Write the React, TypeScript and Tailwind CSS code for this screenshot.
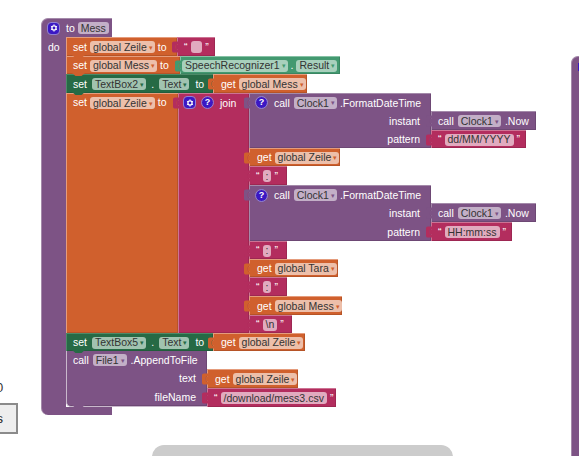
import type { ReactNode } from "react";
import { clsx } from "clsx";
import { twMerge } from "tailwind-merge";

type Tone = "purple" | "orange" | "magenta" | "green" | "dark";

const TONES: Record<Tone, { bg: string; chip: string; arrow: string; fill: string }> = {
  purple: { bg: "bg-[#7d5385] border-[#a48aaa]", chip: "bg-[#c3afc7]", arrow: "text-[#7d5385]", fill: "#7d5385" },
  orange: { bg: "bg-[#d0602d] border-[#e59c7c]", chip: "bg-[#edbfaa]", arrow: "text-[#d0602d]", fill: "#d0602d" },
  magenta: { bg: "bg-[#b32d5e] border-[#cd7394]", chip: "bg-[#e1abbf]", arrow: "text-[#b32d5e]", fill: "#b32d5e" },
  green: { bg: "bg-[#439970] border-[#86c2a5]", chip: "bg-[#a8d0bc]", arrow: "text-[#439970]", fill: "#439970" },
  dark: { bg: "bg-[#266a45] border-[#4c8a68]", chip: "bg-[#a1c3b0]", arrow: "text-[#266a45]", fill: "#266a45" },
};

function Chip({ tone, label, arrow = true, className }: { tone: Tone; label: string; arrow?: boolean; className?: string }) {
  return (
    <span
      className={clsx(
        "flex h-[12px] shrink-0 items-center whitespace-pre rounded-[3px] pl-[3px] text-[#333333]",
        arrow ? "pr-[1px]" : "pr-[3px]",
        TONES[tone].chip,
        className,
      )}
    >
      <span>{label}</span>
      {arrow && <span className={clsx("ml-[2px] w-[5px] text-[7px] leading-none", TONES[tone].arrow)}>▾</span>}
    </span>
  );
}

function Gear() {
  return (
    <span className="flex h-[11px] w-[11px] shrink-0 items-center justify-center rounded-[3px] bg-[#3a18c4] outline outline-1 outline-[#8f7fd6]">
      <svg width="8" height="8" viewBox="0 0 8 8">
        <circle cx="4" cy="4" r="2.1" fill="none" stroke="#fff" strokeWidth="1.3" />
        <path d="M4 .4v1.2M4 6.4v1.2M.9 2.2l1 .6M6.1 5.2l1 .6M.9 5.8l1-.6M6.1 2.8l1-.6" stroke="#fff" strokeWidth="1" />
      </svg>
    </span>
  );
}

function Help() {
  return (
    <span className="flex h-[11px] w-[11px] shrink-0 items-center justify-center rounded-full bg-[#3a18c4] text-[9px] font-bold leading-none text-white outline outline-1 outline-[#8f7fd6]">
      ?
    </span>
  );
}

// little puzzle tab sticking out on the left of a value block
function Tab({ fill }: { fill: string }) {
  return (
    <svg className="absolute left-[-7px] top-[3px]" width="7" height="12" viewBox="0 0 7 12">
      <path d="M7 .5H3C1.6.5 1 1.4 1 2.6v6.8c0 1.2.6 2.1 2 2.1h4V8.5C5.5 9 4.5 8 4.5 6S5.5 3 7 3.5z" fill={fill} />
      <path d="M7 3.5C5.5 3 4.5 4 4.5 6S5.5 9 7 8.5V3.5z" fill={fill} />
    </svg>
  );
}

// notch under a statement block
function Notch({ fill }: { fill: string }) {
  return (
    <svg className="absolute bottom-[-3px] left-[5px] z-10" width="14" height="4" viewBox="0 0 14 4">
      <path d="M0 0l3.5 3h6L13 0z" fill={fill} />
    </svg>
  );
}

type BlockProps = {
  tone: Tone;
  tab?: boolean;
  notch?: boolean;
  className?: string;
  children?: ReactNode;
};

function Block({ tone, tab, notch, className, children }: BlockProps) {
  return (
    <div
      className={twMerge(
        "relative flex shrink-0 items-center gap-[3px] whitespace-nowrap border-l border-t pl-[6px] text-white shadow-[inset_-1px_-1px_0_rgba(0,0,0,0.12)]",
        TONES[tone].bg,
        className,
      )}
    >
      {tab && <Tab fill={TONES[tone].fill} />}
      {notch && <Notch fill={TONES[tone].fill} />}
      {children}
    </div>
  );
}

function GetBlock({ name, className }: { name: string; className: string }) {
  return (
    <Block tone="orange" tab className={twMerge("pl-[7px]", className)}>
      <span>get</span>
      <Chip tone="orange" label={name} />
    </Block>
  );
}

function TextBlock({ value, className }: { value: string; className: string }) {
  return (
    <Block tone="magenta" tab className={className}>
      <span>“</span>
      <Chip tone="magenta" label={value} arrow={false} />
      <span>”</span>
    </Block>
  );
}

function FormatCall({ height, pattern, patternW }: { height: string; pattern: string; patternW: string }) {
  return (
    <div className={clsx("flex", height)}>
      <Block tone="purple" tab className="w-[182px] flex-col items-stretch gap-0 pr-[11px]">
        <span className="flex h-[18px] items-center gap-[3px]">
          <Help />
          <span className="ml-[4px]">call</span>
          <Chip tone="purple" label="Clock1" className="ml-[1px]" />
          <span>.FormatDateTime</span>
        </span>
        <span className="flex h-[19px] items-center justify-end">instant</span>
        <span className="flex h-[18px] items-center justify-end">pattern</span>
      </Block>
      <div className="flex flex-col pt-[18px]">
        <Block tone="purple" tab className="h-[19px] w-[105px] gap-[4px]">
          <span>call</span>
          <Chip tone="purple" label="Clock1" />
          <span>.Now</span>
        </Block>
        <TextBlock value={pattern} className={clsx("flex-1", patternW)} />
      </div>
    </div>
  );
}

function SetProperty({ box, height }: { box: string; height: string }) {
  return (
    <Block tone="dark" notch className={clsx("w-[147px] gap-[5px]", height)}>
      <span>set</span>
      <Chip tone="dark" label={box} />
      <span>.</span>
      <Chip tone="dark" label="Text" />
      <span className="ml-[1px]">to</span>
    </Block>
  );
}

function SetGlobal({ name, className }: { name: string; className: string }) {
  return (
    <Block tone="orange" notch className={className}>
      <span>set</span>
      <Chip tone="orange" label={name} />
      <span>to</span>
    </Block>
  );
}

export default function App() {
  return (
    <div className="relative h-[456px] w-[579px] overflow-hidden bg-white font-['Liberation_Sans',sans-serif] text-[10.5px] leading-none">
      {/* bits of the neighbouring designer panel, cut off by the viewport */}
      <span className="absolute left-[-4px] top-[381px] text-[13px] text-[#333333]">0</span>
      <div className="absolute left-[-30px] top-[403px] flex h-[31px] w-[48px] items-center justify-end border-2 border-[#8b8b8b] bg-[#eeeeee] pr-[13px] text-[13px] text-[#222222]">
        s
      </div>
      <div className="absolute left-[152px] top-[445px] h-[30px] w-[301px] rounded-[12px] bg-[#cccccc]" />

      {/* next procedure on the workspace */}
      <div className="absolute left-[571px] top-[56px] h-[420px] w-[30px] rounded-tl-[7px] border-l border-t border-[#a48aaa] bg-[#7d5385] pl-[6px] pt-[6px]">
        <div className="h-[8px] w-[8px] bg-[#3a18c4]" />
      </div>

      {/* to Mess procedure */}
      <div className="absolute left-[41px] top-[18px] flex w-max flex-col text-white">
        <div className="flex h-[19px] w-[71px] items-center rounded-tl-[7px] border-l border-t border-[#a48aaa] bg-[#7d5385] pl-[6px]">
          <Gear />
          <span className="ml-[7px]">to</span>
          <Chip tone="purple" label="Mess" arrow={false} className="ml-[3px]" />
        </div>

        <div className="flex">
          <div className="w-[25px] border-l border-[#a48aaa] bg-[#7d5385] pl-[6px] pt-[5px]">do</div>

          <div className="flex flex-col">
            <div className="flex h-[19px]">
              <SetGlobal name="global Zeile" className="w-[111px]" />
              <TextBlock value="  " className="w-[38px]" />
            </div>

            <div className="flex h-[18px]">
              <SetGlobal name="global Mess" className="w-[114px]" />
              <Block tone="green" tab className="w-[160px] pl-[1px]">
                <Chip tone="green" label="SpeechRecognizer1" />
                <span>.</span>
                <Chip tone="green" label="Result" />
              </Block>
            </div>

            <div className="flex h-[19px]">
              <SetProperty box="TextBox2" height="h-[19px]" />
              <GetBlock name="global Mess" className="w-[94px]" />
            </div>

            <div className="flex">
              <Block tone="orange" className="w-[112px] items-start pt-[3px]">
                <span>set</span>
                <Chip tone="orange" label="global Zeile" />
                <span>to</span>
              </Block>
              <Block tone="magenta" tab className="w-[71px] items-start gap-[7px] pl-[5px] pt-[3px]">
                <Gear />
                <Help />
                <span className="pt-[1px]">join</span>
              </Block>
              <div className="flex flex-col">
                <FormatCall height="h-[55px]" pattern="dd/MM/YYYY" patternW="w-[95px]" />
                <GetBlock name="global Zeile" className="h-[18px] w-[91px]" />
                <TextBlock value=":" className="h-[19px] w-[38px]" />
                <FormatCall height="h-[56px]" pattern="HH:mm:ss" patternW="w-[81px]" />
                <TextBlock value=":" className="h-[18px] w-[38px]" />
                <GetBlock name="global Tara" className="h-[18px] w-[89px]" />
                <TextBlock value=":" className="h-[19px] w-[38px]" />
                <GetBlock name="global Mess" className="h-[19px] w-[93px]" />
                <TextBlock value="\n" className="h-[18px] w-[43px]" />
              </div>
            </div>

            <div className="flex h-[18px]">
              <SetProperty box="TextBox5" height="h-[18px]" />
              <GetBlock name="global Zeile" className="w-[92px]" />
            </div>

            <div className="flex h-[56px]">
              <Block
                tone="purple"
                notch
                className="w-[141px] flex-col items-stretch gap-0 rounded-bl-[5px] border-b border-t-0 border-[#c9b8cc] pr-[11px]"
              >
                <span className="flex h-[18px] items-center gap-[4px]">
                  <span>call</span>
                  <Chip tone="purple" label="File1" />
                  <span>.AppendToFile</span>
                </span>
                <span className="flex h-[19px] items-center justify-end">text</span>
                <span className="flex h-[18px] items-center justify-end">fileName</span>
              </Block>
              <div className="flex flex-col pt-[18px]">
                <GetBlock name="global Zeile" className="h-[19px] w-[91px]" />
                <TextBlock value="/download/mess3.csv" className="h-[19px] w-[129px]" />
              </div>
            </div>
          </div>
        </div>

        <div className="h-[8px] w-[71px] rounded-b-[7px] rounded-br-none border-l border-[#a48aaa] bg-[#7d5385]" />
      </div>
    </div>
  );
}
